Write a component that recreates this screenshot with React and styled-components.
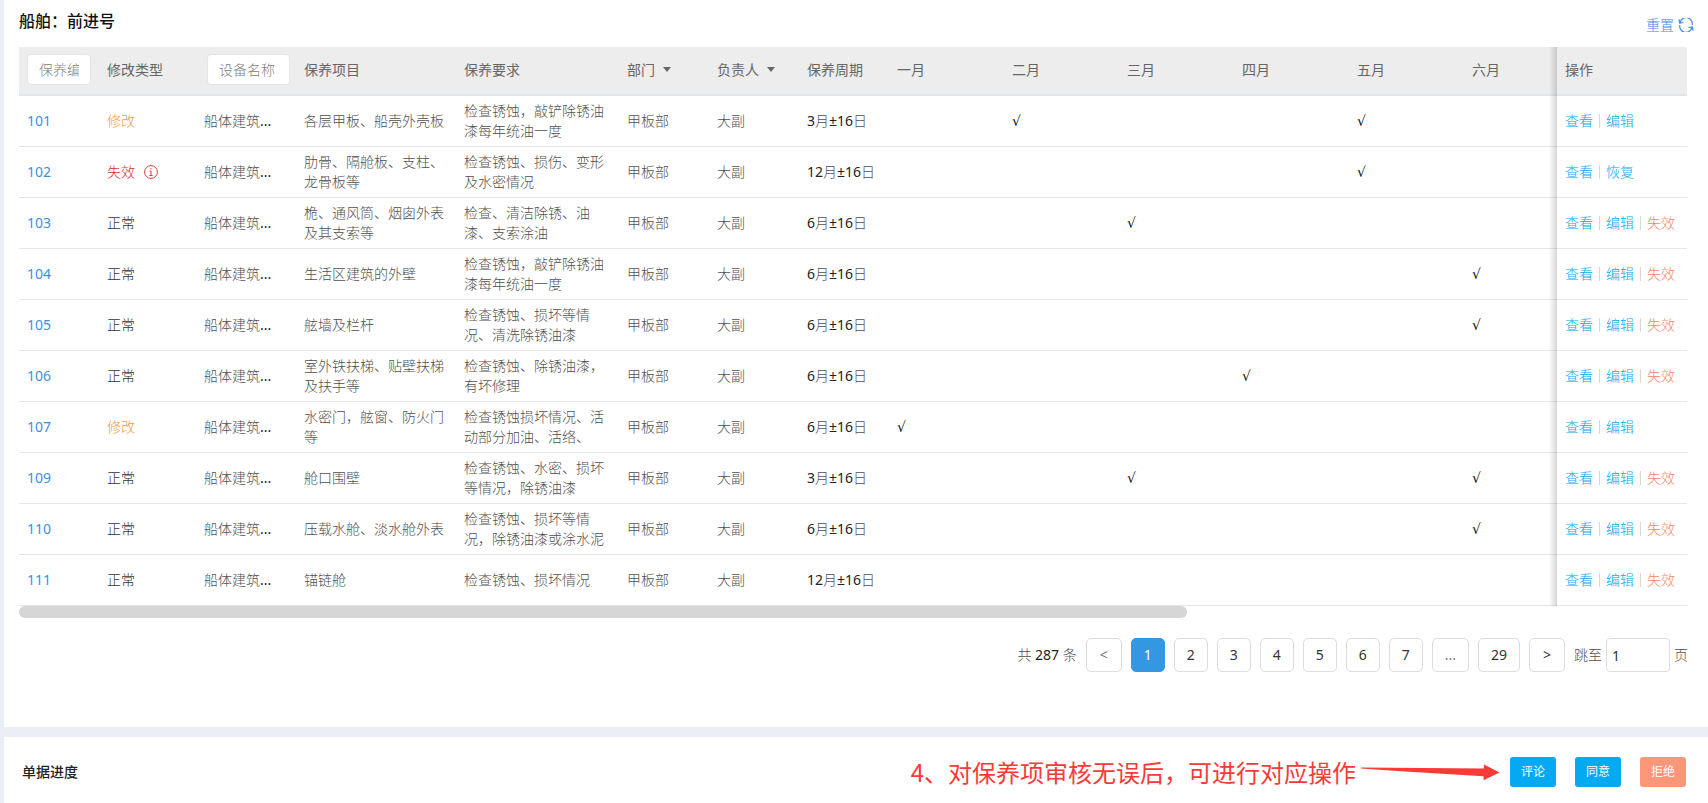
import React from "react";
import styled, { createGlobalStyle, css } from "styled-components";

const GlobalStyle = createGlobalStyle`
  *, *::before, *::after { box-sizing: border-box; }
  body {
    margin: 0;
    background: #ebeff5;
    color: #505050;
    font: 300 14px/20px "Noto Sans", "Noto Sans CJK SC", sans-serif;
  }
  button, input, select { font: inherit; color: inherit; }
`;

const Page = styled.div`
  display: flex;
  flex-direction: column;
  gap: 10px;
  min-height: 100vh;
  padding-left: 4px;
  background: #ebeff5;
`;

const Panel = styled.section`
  padding: 11px 21px 0 15px;
  background: #fff;
`;

const PanelHead = styled.header`
  display: flex;
  justify-content: space-between;
  height: 36px;
  margin-right: -7px;
`;

const Title = styled.h1`
  margin: 0;
  color: #111;
  font-size: 16px;
  font-weight: 500;
  line-height: 20px;
`;

const ResetButton = styled.button`
  display: flex;
  align-items: center;
  gap: 4px;
  height: 28px;
  padding: 0;
  border: 0;
  background: none;
  color: #3c84e0;
  cursor: pointer;
`;

const TableScroller = styled.div`
  overflow-x: auto;
  scrollbar-width: none;
`;

const Table = styled.table`
  width: 100%;
  min-width: 1560px;
  table-layout: fixed;
  border-collapse: separate;
  border-spacing: 0;
`;

const Col = styled.col`
  width: ${(p) => p.$w}px;
`;

const HeadCell = styled.th`
  height: 49px;
  padding: 0 8px 2px;
  border-bottom: 2px solid #e1e6eb;
  background: #ededed;
  color: #666;
  font-weight: 400;
  text-align: left;
  white-space: nowrap;
`;

const Cell = styled.td`
  height: 51px;
  padding: 0 8px;
  border-bottom: 1px solid #e4e6e9;
  background: #fff;
  color: ${(p) => p.$color || "#505050"};
  line-height: 20px;
  white-space: ${(p) => (p.$wrap ? "normal" : "nowrap")};
`;

const MarkCell = styled(Cell)`
  font-family: "DejaVu Sans", sans-serif;
  font-weight: 400;
`;

const pinned = css`
  position: sticky;
  right: 0;
  &::before {
    content: "";
    position: absolute;
    top: 0;
    right: 100%;
    bottom: -2px;
    width: 8px;
    background: linear-gradient(to left, rgba(0, 0, 0, 0.16), rgba(0, 0, 0, 0));
  }
`;
const PinnedHead = styled(HeadCell)`
  ${pinned}
`;
const PinnedCell = styled(Cell)`
  ${pinned}
  &::before { bottom: -1px; }
`;

const CodeLink = styled.a`
  color: #3793df;
  font-weight: 400;
  text-decoration: none;
`;

const Figure = styled.span`
  color: #222;
  font-weight: 400;
`;

const Status = styled.span`
  display: inline-flex;
  align-items: center;
  gap: 9px;
  color: ${(p) => p.$color};
`;

const FilterSlot = styled.div`
  padding-left: ${(p) => (p.$inset ? 3 : 0)}px;
  margin-right: ${(p) => (p.$inset ? -2 : 0)}px;
`;

const FilterInput = styled.input`
  display: block;
  width: 100%;
  height: 31px;
  padding: 0 11px;
  border: 1px solid #e2e5ea;
  border-radius: 4px;
  background: #fff;
  font-weight: 300;
  &::placeholder { color: #808080; opacity: 1; }
`;

const MenuButton = styled.button`
  display: flex;
  align-items: center;
  gap: 8px;
  padding: 0;
  border: 0;
  background: none;
  font-weight: 400;
`;

const Caret = styled.span`
  border: 4px solid transparent;
  border-top: 5px solid #666;
  border-bottom: 0;
`;

const Actions = styled.div`
  display: flex;
  align-items: center;
`;

const Action = styled.span`
  display: flex;
  align-items: center;
  & + &::before {
    content: "";
    width: 1px;
    height: 14px;
    margin: 0 6px;
    background: #d8d8d8;
  }
`;

const ActionLink = styled.a`
  color: ${(p) => (p.$danger ? "#fb8463" : "#03a9f3")};
  text-decoration: none;
`;

const ScrollTrack = styled.div`
  height: 12px;
`;
const ScrollThumb = styled.div`
  width: 70%;
  height: 100%;
  border-radius: 6px;
  background: #d6d6d6;
`;

const Pagination = styled.nav`
  display: flex;
  justify-content: flex-end;
  align-items: center;
  gap: 9px;
  padding: 20px 0 55px;
  margin-right: -1px;
`;

const PageButton = styled.button`
  min-width: ${(p) => (p.$wide ? 36 : 34)}px;
  height: 34px;
  padding: 0 ${(p) => (p.$wide ? 12 : 8)}px;
  border: 1px solid ${(p) => (p.$active ? "#3397e1" : "#ddd")};
  border-radius: 5px;
  background: ${(p) => (p.$active ? "#3397e1" : "#fff")};
  color: ${(p) => (p.$active ? "#fff" : p.$muted ? "#777" : "#333")};
  font-weight: 400;
`;

const Jump = styled.label`
  display: flex;
  align-items: center;
  gap: 4px;
`;

const JumpInput = styled.input`
  width: 64px;
  height: 34px;
  padding: 0 5px;
  border: 1px solid #ddd;
  border-radius: 4px;
  color: #333;
  font-weight: 400;
`;

const Progress = styled.section`
  display: flex;
  flex: 1;
  align-items: flex-start;
  justify-content: space-between;
  padding: 20px 22px 16px 18px;
  background: #fff;
`;

const ProgressTitle = styled.h2`
  margin: 0;
  color: #222;
  font-size: 14px;
  font-weight: 500;
  line-height: 30px;
`;

const ReviewBar = styled.div`
  display: flex;
  align-items: center;
  gap: 19px;
`;

const Note = styled.p`
  display: flex;
  align-items: center;
  gap: 5px;
  margin: 0 -9px 0 0;
  color: #fb3a38;
  font-family: "Noto Sans CJK SC", sans-serif;
  font-size: 24px;
  font-weight: 400;
  line-height: 30px;
`;

const ReviewButton = styled.button`
  width: 46px;
  height: 30px;
  padding: 0;
  border: 0;
  border-radius: 3px;
  background: ${(p) => (p.$danger ? "#fb9678" : "#03a9f3")};
  color: #fff;
  font-size: 12px;
  font-weight: 400;
`;

const InfoIcon = () => (
  <svg width="14" height="14" viewBox="0 0 14 14" fill="none" stroke="#d93a3a">
    <circle cx="7" cy="7" r="6.4" />
    <path d="M7 3v1.4M5.6 6H7v4.3M5.4 10.5h3.2" />
  </svg>
);

const RefreshIcon = () => (
  <svg width="16" height="14" viewBox="0 0 16 14" fill="none" stroke="#3c8ee0" strokeWidth="1.2">
    <path d="M2 4.6A6.2 6.2 0 0 1 14.2 7M1 1.4 1.6 5l3.8-.5" />
    <path d="M14 9.4A6.2 6.2 0 0 1 1.8 7M15 12.6 14.4 9l-3.8.5" />
  </svg>
);

const Arrow = () => (
  <svg width="139" height="18" viewBox="0 0 139 18" fill="#fb3a38">
    <path d="M0 4.4 123 5.6V1.4L138.5 9.4 122.5 17.2V13.2L40 8.2 0 5.4Z" />
  </svg>
);

const MONTHS = ["一月", "二月", "三月", "四月", "五月", "六月"];
const WIDTHS = [80, 97, 100, 160, 163, 90, 90, 90, 115, 115, 115, 115, 115];

const ROWS = [
  ["101", "修改", "各层甲板、船壳外壳板", "检查锈蚀，敲铲除锈油漆每年统油一度", "3", [2, 5]],
  ["102", "失效", "肋骨、隔舱板、支柱、龙骨板等", "检查锈蚀、损伤、变形及水密情况", "12", [5]],
  ["103", "正常", "桅、通风筒、烟囱外表及其支索等", "检查、清洁除锈、油漆、支索涂油", "6", [3]],
  ["104", "正常", "生活区建筑的外壁", "检查锈蚀，敲铲除锈油漆每年统油一度", "6", [6]],
  ["105", "正常", "舷墙及栏杆", "检查锈蚀、损坏等情况、清洗除锈油漆", "6", [6]],
  ["106", "正常", "室外铁扶梯、贴壁扶梯及扶手等", "检查锈蚀、除锈油漆，有坏修理", "6", [4]],
  ["107", "修改", "水密门，舷窗、防火门等", "检查锈蚀损坏情况、活动部分加油、活络、", "6", [1]],
  ["109", "正常", "舱口围壁", "检查锈蚀、水密、损坏等情况，除锈油漆", "3", [3, 6]],
  ["110", "正常", "压载水舱、淡水舱外表", "检查锈蚀、损坏等情况，除锈油漆或涂水泥", "6", [6]],
  ["111", "正常", "锚链舱", "检查锈蚀、损坏情况", "12", []],
];

const STATUS_COLORS = { 修改: "#f39a45", 失效: "#d82c2c", 正常: "#333" };
const STATUS_ACTIONS = {
  修改: ["查看", "编辑"],
  失效: ["查看", "恢复"],
  正常: ["查看", "编辑", "失效"],
};

function Row({ row }) {
  const [code, status, item, requirement, period, marks] = row;
  return (
    <tr>
      <Cell><CodeLink href="#">{code}</CodeLink></Cell>
      <Cell>
        <Status $color={STATUS_COLORS[status]}>
          {status}
          {status === "失效" && <InfoIcon />}
        </Status>
      </Cell>
      <Cell>船体建筑<Figure>...</Figure></Cell>
      <Cell $wrap>{item}</Cell>
      <Cell $wrap>{requirement}</Cell>
      <Cell>甲板部</Cell>
      <Cell>大副</Cell>
      <Cell><Figure>{period}</Figure>月<Figure>±16</Figure>日</Cell>
      {MONTHS.map((m, i) => (
        <MarkCell key={m} $color="#111">{marks.includes(i + 1) ? "√" : ""}</MarkCell>
      ))}
      <PinnedCell>
        <Actions>
          {STATUS_ACTIONS[status].map((a) => (
            <Action key={a}>
              <ActionLink href="#" $danger={a === "失效"}>{a}</ActionLink>
            </Action>
          ))}
        </Actions>
      </PinnedCell>
    </tr>
  );
}

export default function App() {
  return (
    <Page>
      <GlobalStyle />
      <Panel>
        <PanelHead>
          <Title>船舶：前进号</Title>
          <ResetButton type="button">重置<RefreshIcon /></ResetButton>
        </PanelHead>
        <TableScroller>
          <Table>
            <colgroup>
              {WIDTHS.map((w, i) => <Col key={i} $w={w} />)}
              <col />
              <Col $w={130} />
            </colgroup>
            <thead>
              <tr>
                <HeadCell><FilterSlot><FilterInput placeholder="保养编号" /></FilterSlot></HeadCell>
                <HeadCell>修改类型</HeadCell>
                <HeadCell><FilterSlot $inset><FilterInput placeholder="设备名称" /></FilterSlot></HeadCell>
                <HeadCell>保养项目</HeadCell>
                <HeadCell>保养要求</HeadCell>
                <HeadCell><MenuButton type="button">部门<Caret /></MenuButton></HeadCell>
                <HeadCell><MenuButton type="button">负责人<Caret /></MenuButton></HeadCell>
                <HeadCell>保养周期</HeadCell>
                {MONTHS.map((m) => <HeadCell key={m}>{m}</HeadCell>)}
                <PinnedHead>操作</PinnedHead>
              </tr>
            </thead>
            <tbody>
              {ROWS.map((row) => <Row key={row[0]} row={row} />)}
            </tbody>
          </Table>
        </TableScroller>
        <ScrollTrack><ScrollThumb /></ScrollTrack>
        <Pagination>
          <span>共 <Figure>287</Figure> 条</span>
          <PageButton type="button" $muted $wide>&lt;</PageButton>
          {["1", "2", "3", "4", "5", "6", "7"].map((n) => (
            <PageButton type="button" key={n} $active={n === "1"}>{n}</PageButton>
          ))}
          <PageButton type="button" $muted $wide>...</PageButton>
          <PageButton type="button" $wide>29</PageButton>
          <PageButton type="button" $wide>&gt;</PageButton>
          <Jump>跳至<JumpInput defaultValue="1" />页</Jump>
        </Pagination>
      </Panel>
      <Progress>
        <ProgressTitle>单据进度</ProgressTitle>
        <ReviewBar>
          <Note>4、对保养项审核无误后，可进行对应操作<Arrow /></Note>
          <ReviewButton type="button">评论</ReviewButton>
          <ReviewButton type="button">同意</ReviewButton>
          <ReviewButton type="button" $danger>拒绝</ReviewButton>
        </ReviewBar>
      </Progress>
    </Page>
  );
}
